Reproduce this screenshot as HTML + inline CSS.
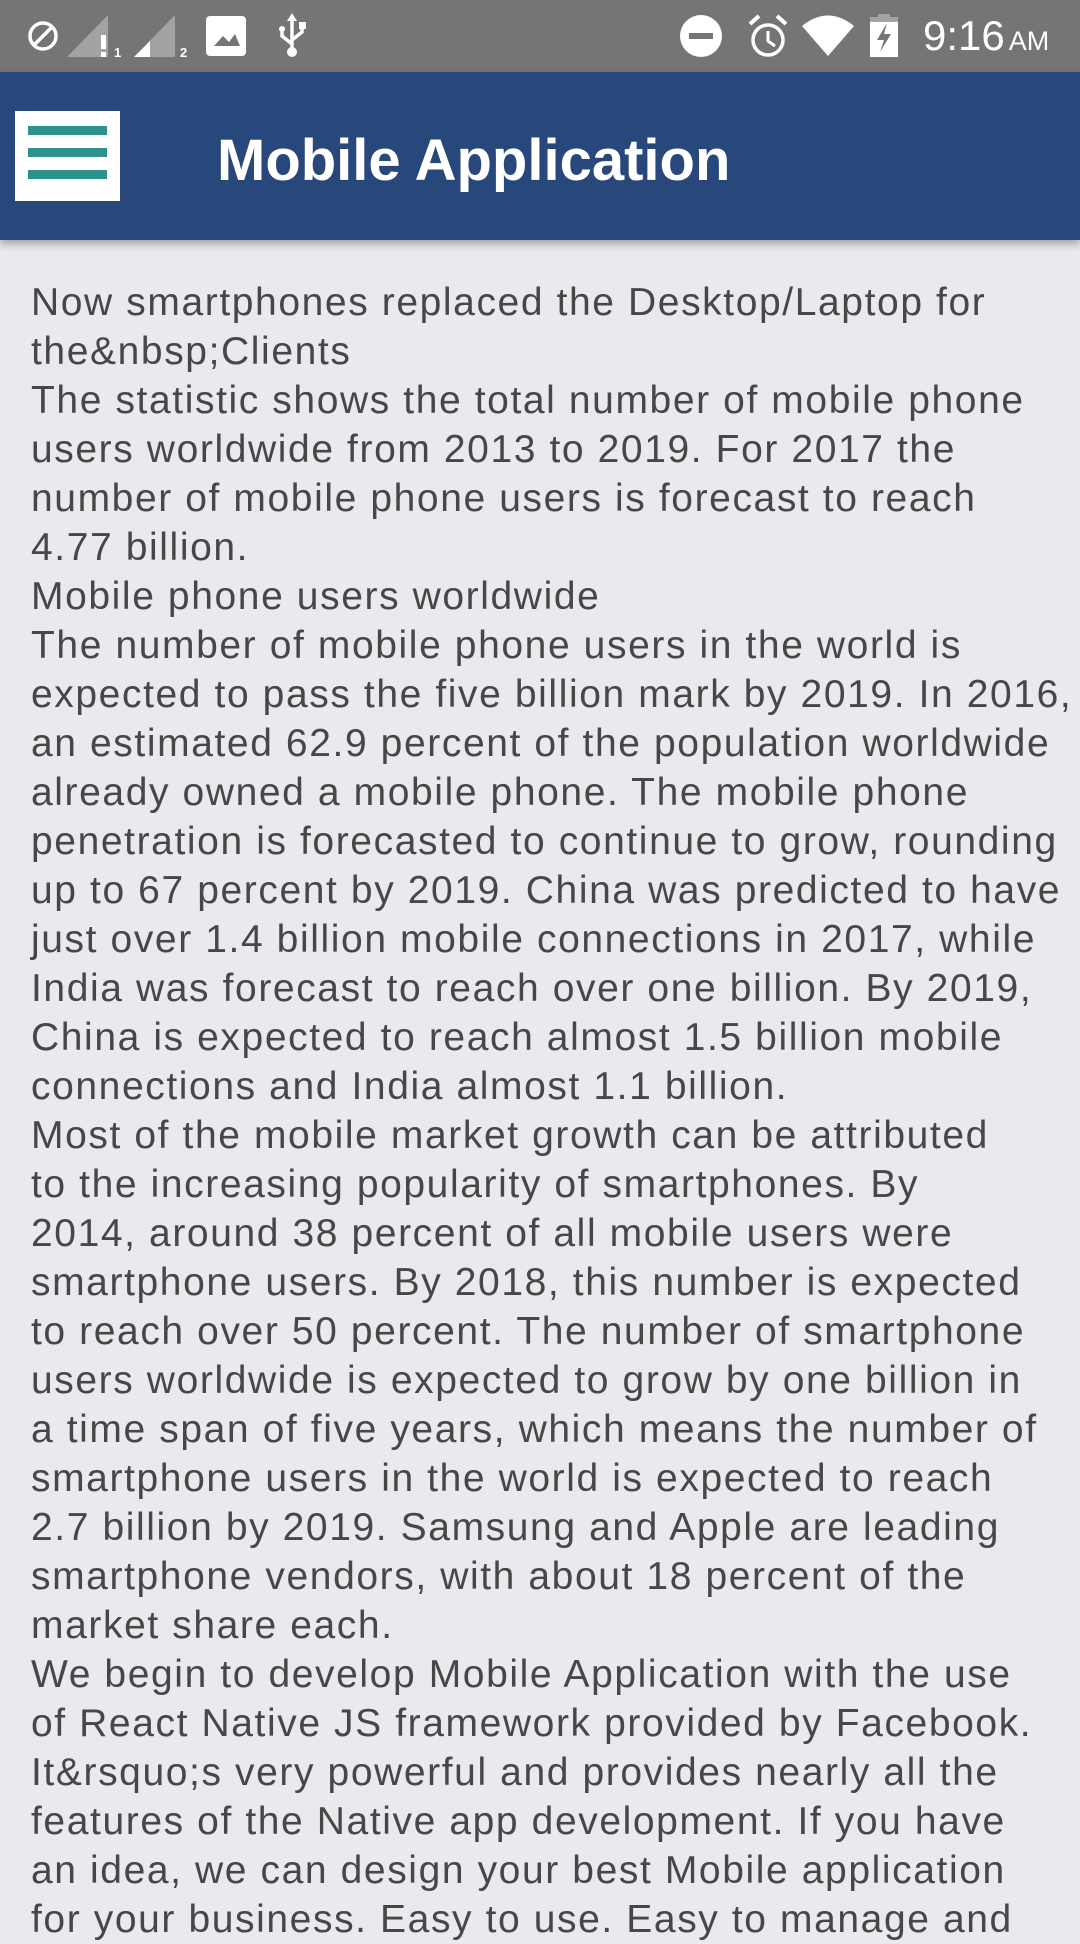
<!DOCTYPE html>
<html><head><meta charset="utf-8">
<style>
html,body{margin:0;padding:0;}
body{width:1080px;height:1920px;overflow:hidden;background:#e9e9ee;position:relative;font-family:"Liberation Sans",sans-serif;}
.status{position:absolute;left:0;top:0;width:1080px;height:72px;background:#757575;}
.appbar{position:absolute;left:0;top:72px;width:1080px;height:168px;background:#28487b;box-shadow:0 4px 8px rgba(0,0,0,0.3);}
.menu{position:absolute;left:15px;top:39px;width:105px;height:90px;background:#fff;}
.menu i{position:absolute;left:13px;width:79px;height:9px;background:#2e928c;}
.title{position:absolute;left:217px;top:54px;font-size:58px;font-weight:bold;color:#fff;line-height:70px;}
.body{position:absolute;left:31px;top:278px;font-size:39px;line-height:49px;color:#474747;white-space:nowrap;letter-spacing:1.6px;}
.time{position:absolute;left:923px;top:11px;color:#fff;font-size:42px;line-height:50px;}
.time small{font-size:27px;margin-left:4px;}
</style></head><body>
<div class="status">
<svg width="400" height="72" style="position:absolute;left:0;top:0">
 <circle cx="43" cy="36" r="13" fill="none" stroke="#fff" stroke-width="3.5"/>
 <line x1="34" y1="45" x2="52" y2="27" stroke="#fff" stroke-width="3.5"/>
 <polygon points="67,57 108,15 108,57" fill="#a3a3a3"/>
 <rect x="101" y="35" width="5" height="14" fill="#fff"/><rect x="101" y="52" width="5" height="5" fill="#fff"/>
 <text x="114" y="57" fill="#fff" font-size="13" font-weight="bold" font-family="Liberation Sans">1</text>
 <polygon points="134,57 175,15 175,57" fill="#a3a3a3"/>
 <polygon points="134,57 150,41 150,57" fill="#fff"/>
 <text x="180" y="57" fill="#fff" font-size="13" font-weight="bold" font-family="Liberation Sans">2</text>
 <rect x="206" y="16" width="40" height="40" rx="4" fill="#fff"/>
 <polygon points="214,46 223,36 229,42 235,34 240,46" fill="#757575"/>
 <g stroke="#fff" stroke-width="3.5" fill="none">
  <line x1="292" y1="18" x2="292" y2="50"/>
  <path d="M292 44 L282 36 L282 30"/>
  <path d="M292 40 L302 32 L302 26"/>
 </g>
 <polygon points="292,13 287,21 297,21" fill="#fff"/>
 <circle cx="282" cy="29" r="3" fill="#fff"/><rect x="299" y="22" width="7" height="7" fill="#fff"/>
 <circle cx="292" cy="52" r="5" fill="#fff"/>
</svg>
<svg width="260" height="72" style="position:absolute;left:660px;top:0">
 <circle cx="41" cy="36" r="21" fill="#fff"/><rect x="29" y="33" width="24" height="6" fill="#757575"/>
 <circle cx="108" cy="40" r="15" fill="none" stroke="#fff" stroke-width="3.5"/>
 <path d="M108 31 V41 L115 46" fill="none" stroke="#fff" stroke-width="3"/>
 <path d="M90 24 L99 16 M126 24 L117 16" stroke="#fff" stroke-width="4"/>
 <path d="M142 26 Q168 5 194 26 L168 56 Z" fill="#fff"/>
 <rect x="218" y="14" width="12" height="4" fill="#a3a3a3"/>
 <rect x="210" y="17" width="28" height="40" fill="#fff"/>
 <rect x="210" y="17" width="28" height="5" fill="#a3a3a3"/>
 <polygon points="227,23 217,40 224,40 220,52 231,34 224,34" fill="#757575"/>
</svg>
<div class="time">9:16<small>AM</small></div>
</div>
<div class="appbar">
 <div class="menu"><i style="top:15px"></i><i style="top:37px"></i><i style="top:59px"></i></div>
 <div class="title">Mobile Application</div>
</div>
<div class="body">Now smartphones replaced the Desktop/Laptop for<br>
the&amp;nbsp;Clients<br>
The statistic shows the total number of mobile phone<br>
users worldwide from 2013 to 2019. For 2017 the<br>
number of mobile phone users is forecast to reach<br>
4.77 billion.<br>
Mobile phone users worldwide<br>
The number of mobile phone users in the world is<br>
expected to pass the five billion mark by 2019. In 2016,<br>
an estimated 62.9 percent of the population worldwide<br>
already owned a mobile phone. The mobile phone<br>
penetration is forecasted to continue to grow, rounding<br>
up to 67 percent by 2019. China was predicted to have<br>
just over 1.4 billion mobile connections in 2017, while<br>
India was forecast to reach over one billion. By 2019,<br>
China is expected to reach almost 1.5 billion mobile<br>
connections and India almost 1.1 billion.<br>
Most of the mobile market growth can be attributed<br>
to the increasing popularity of smartphones. By<br>
2014, around 38 percent of all mobile users were<br>
smartphone users. By 2018, this number is expected<br>
to reach over 50 percent. The number of smartphone<br>
users worldwide is expected to grow by one billion in<br>
a time span of five years, which means the number of<br>
smartphone users in the world is expected to reach<br>
2.7 billion by 2019. Samsung and Apple are leading<br>
smartphone vendors, with about 18 percent of the<br>
market share each.<br>
We begin to develop Mobile Application with the use<br>
of React Native JS framework provided by Facebook.<br>
It&amp;rsquo;s very powerful and provides nearly all the<br>
features of the Native app development. If you have<br>
an idea, we can design your best Mobile application<br>
for your business. Easy to use. Easy to manage and</div>
</body></html>
